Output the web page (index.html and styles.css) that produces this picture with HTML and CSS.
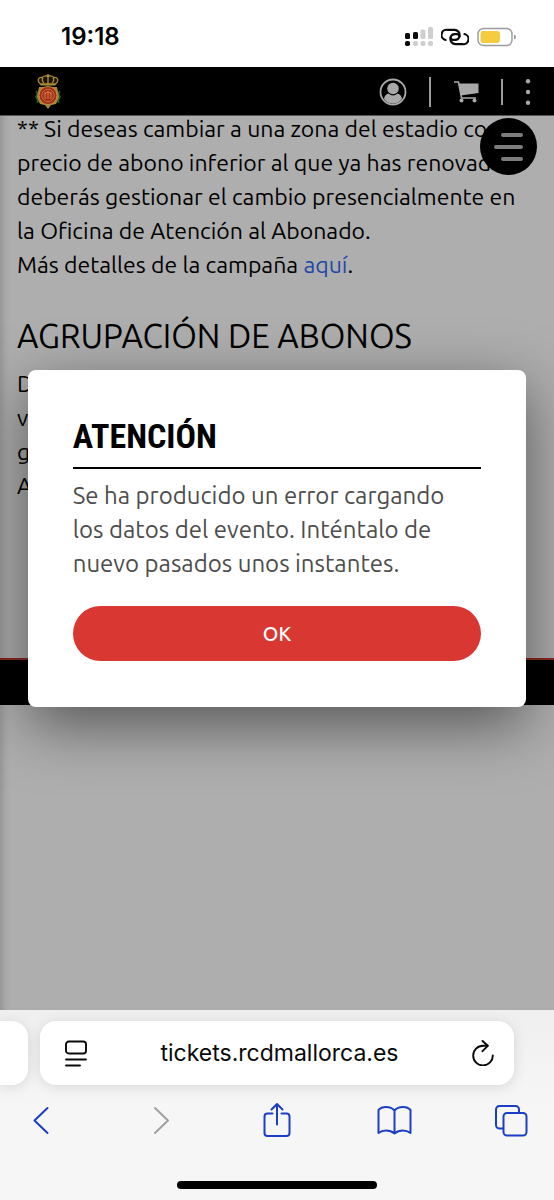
FILE: index.html
```
<!DOCTYPE html>
<html lang="es">
<head>
<meta charset="utf-8">
<meta name="viewport" content="width=device-width, initial-scale=1">
<title>tickets.rcdmallorca.es</title>
<link rel="stylesheet" href="styles.css">
</head>
<body>
<div class="phone">
  <div class="status">
    <time class="clock">19:18</time>
    <div class="indicators">
      <svg width="28" height="20" viewBox="0 0 28 20" aria-label="Cobertura">
        <g fill="#0b0b0b"><rect x="0" y="6" width="5" height="6" rx="1.5"/><rect x="8" y="5" width="5" height="7" rx="1.5"/><rect x="0" y="14" width="5" height="5" rx="1.8"/></g>
        <g fill="#cfcfcf"><rect x="15.500" y="2.500" width="5" height="9.500" rx="1.500"/><rect x="23" y="0" width="5" height="12" rx="1.500"/><rect x="8" y="14" width="5" height="5" rx="2"/><rect x="15.500" y="14" width="5" height="5" rx="2"/><rect x="23" y="14" width="5" height="5" rx="2"/></g>
      </svg>
      <svg width="28" height="18" viewBox="0 0 28 18" fill="none" stroke="#0b0b0b" stroke-width="2.200" stroke-linecap="round" aria-label="Punto de acceso">
        <path d="M4.500 12A5.200 5.200 0 0 1 6.500 1.800H13.500A5.200 5.200 0 0 1 18.500 8A4.500 4.500 0 0 1 14 11.800H11.500A2.800 2.800 0 0 1 9.500 9.500"/>
        <path d="M23.500 6A5.200 5.200 0 0 1 21.500 16.200H14.500A5.200 5.200 0 0 1 9.500 10A4.500 4.500 0 0 1 14 6.200H16.500A2.800 2.800 0 0 1 18.500 8.500"/>
      </svg>
      <svg width="40" height="20" viewBox="0 0 40 20" aria-label="Batería">
        <rect x="1" y="1.500" width="34" height="17" rx="5.500" fill="none" stroke="#9b9b9b" stroke-width="1.400"/>
        <rect x="3.500" y="4" width="19.500" height="12" rx="3" fill="#f5cc3f"/>
        <path d="M37 7.500Q39 8 39 10Q39 12 37 12.500Z" fill="#9b9b9b"/>
      </svg>
    </div>
  </div>

  <main class="view">
    <header class="site-header">
      <a class="logo" href="#" aria-label="RCD Mallorca">
        <svg width="28" height="36" viewBox="0 0 28 36">
          <ellipse cx="14" cy="22.500" rx="12.300" ry="9" fill="#17472d"/>
          <path d="M2 17l2 3-2 3 2 3-1 3M26 17l-2 3 2 3-2 3 1 3" stroke="#2b5c32" fill="none" stroke-width="1.500"/>
          <path d="M5 13h18l2 10-3 7-5 1-3 4-3-4-5-1-3-7Z" fill="#a88738"/>
          <path d="M6.500 10C2 6 5 3 8 3.500Q11 1 14 2.500Q17 1 20 3.500C23 3 26 6 21.500 10Z" fill="#1b1708" stroke="#a98a36" stroke-width="1.300"/>
          <path d="M14 0v10M12.500 1.500h3M9 4q-2 2 1 5M19 4q2 2-1 5M6.500 10.800h15" stroke="#b59741" stroke-width="1.200" fill="none"/>
          <circle cx="14" cy="21.500" r="9" fill="#a3261c" stroke="#c18e36" stroke-width="1"/>
          <circle cx="14" cy="21.500" r="6.300" fill="#ab2b20" stroke="#c68b38" stroke-width=".8"/>
          <path d="M11 25v-7M17 25v-7M14 17v8M11 20q3-4 6 0" stroke="#c99a40" stroke-width=".9" fill="none"/>
        </svg>
      </a>
      <nav class="site-nav">
        <button class="icon-btn" type="button" aria-label="Mi cuenta">
          <svg width="28" height="28" viewBox="0 0 28 28"><circle cx="14" cy="14" r="12.500" fill="none" stroke="#a9a9a9" stroke-width="1.800"/><circle cx="14" cy="10.500" r="5.800" fill="#a9a9a9"/><path d="M5 21Q5.500 16.500 9.500 15.500Q14 19.500 18.500 15.500Q22.500 16.500 23 21Q19.500 25.500 14 25.500Q8.500 25.500 5 21Z" fill="#a9a9a9"/></svg>
        </button>
        <span class="rule"></span>
        <button class="icon-btn" type="button" aria-label="Carrito">
          <svg width="26" height="24" viewBox="0 0 26 24"><path d="M1 2h4.500l3 16H23" fill="none" stroke="#a9a9a9" stroke-width="1.600"/><path d="M6 3.500H25.500V13L7.800 15.500Z" fill="#a9a9a9"/><circle cx="8.500" cy="20.500" r="2" fill="#a9a9a9"/><circle cx="21.500" cy="20.500" r="2" fill="#a9a9a9"/></svg>
        </button>
        <span class="rule rule-short"></span>
        <button class="icon-btn" type="button" aria-label="Más opciones">
          <svg width="6" height="26" viewBox="0 0 6 26" fill="#a9a9a9"><circle cx="3" cy="2.300" r="2.200"/><circle cx="3" cy="13" r="2.200"/><circle cx="3" cy="23.700" r="2.200"/></svg>
        </button>
      </nav>
      <button class="menu" type="button" aria-label="Menú"><span></span><span class="long"></span><span></span></button>
    </header>

    <article class="content">
      <p>** Si deseas cambiar a una zona del estadio con<br>precio de abono inferior al que ya has renovado,<br>deberás gestionar el cambio presencialmente en<br>la Oficina de Atención al Abonado.<br>Más detalles de la campaña <a href="#">aquí</a>.</p>
      <h2>AGRUPACIÓN DE ABONOS</h2>
      <p>D<br>v<br>g<br>A</p>
    </article>
    <footer class="site-footer"></footer>

    <div class="overlay">
      <section class="dialog" role="alertdialog" aria-labelledby="dlg-title" aria-describedby="dlg-text">
        <h1 id="dlg-title">ATENCIÓN</h1>
        <p id="dlg-text">Se ha producido un error cargando<br>los datos del evento. Inténtalo de<br>nuevo pasados unos instantes.</p>
        <button class="ok" type="button">OK</button>
      </section>
    </div>
  </main>

  <div class="browser">
    <div class="tabs">
      <div class="prev-tab"></div>
      <div class="address">
        <button class="icon-btn" type="button" aria-label="Ajustes de página">
          <svg width="22" height="27" viewBox="0 0 22 27" fill="none" stroke="#0a0a0a" stroke-width="1.900" stroke-linecap="round"><rect x="1" y="1.500" width="20" height="12" rx="2.800"/><path d="M1 19.500h20M1 25.500h14"/></svg>
        </button>
        <a class="url" href="#">tickets.rcdmallorca.es</a>
        <button class="icon-btn" type="button" aria-label="Recargar">
          <svg width="22" height="26" viewBox="0 0 22 26" fill="none" stroke="#0a0a0a" stroke-width="1.900" stroke-linecap="round" stroke-linejoin="round"><path d="M15.500 5.800H11A9.800 9.800 0 1 0 20.800 15.400"/><path d="M10.500 1L15.800 5.800L10.500 11.200"/></svg>
        </button>
      </div>
    </div>
    <nav class="toolbar">
      <button class="icon-btn" type="button" aria-label="Atrás"><svg width="36" height="36" viewBox="0 0 36 36"><path d="M24.500 6L11.500 18.500L24.500 31"/></svg></button>
      <button class="icon-btn off" type="button" aria-label="Adelante"><svg width="36" height="36" viewBox="0 0 36 36"><path d="M14 6L27 18.500L14 31"/></svg></button>
      <button class="icon-btn" type="button" aria-label="Compartir"><svg width="36" height="36" viewBox="0 0 36 36"><path d="M14.500 11.500H9.500A3 3 0 0 0 6.500 14.500V31A3 3 0 0 0 9.500 34H28.500A3 3 0 0 0 31.500 31V14.500A3 3 0 0 0 28.500 11.500H23.500M19 22.500V2.500M13.500 7.500L19 2L24.500 7.500"/></svg></button>
      <button class="icon-btn" type="button" aria-label="Marcadores"><svg width="36" height="36" viewBox="0 0 36 36"><path d="M18.500 8.500Q15.500 5 10 5Q5 5 2.500 8V31Q6 28.500 10 28.500Q15 28.500 18.500 31.500Q22 28.500 27 28.500Q31 28.500 34.500 31V8Q32 5 27 5Q21.500 5 18.500 8.500V31.500"/></svg></button>
      <button class="icon-btn" type="button" aria-label="Pestañas"><svg width="36" height="36" viewBox="0 0 36 36"><rect x="10.500" y="11" width="23" height="22.500" rx="3.500"/><path d="M10 26.500H6.500A3.500 3.500 0 0 1 3 23V7.500A3.500 3.500 0 0 1 6.500 4H22.500A3.500 3.500 0 0 1 26 7.500V10.500"/></svg></button>
    </nav>
    <div class="home"></div>
  </div>
</div>
</body>
</html>
```
FILE: styles.css
```
* { box-sizing: border-box; }
body, h1, h2, p { margin: 0; }
body { font-family: Ubuntu, "Noto Sans", sans-serif; background: #fff; color: #000; }
button { font: inherit; border: 0; padding: 0; background: none; cursor: pointer; }
svg { display: block; }

.phone { display: flex; flex-direction: column; min-height: 100vh; }

.status { display: flex; justify-content: space-between; align-items: center; padding: 20px 37px 13px 61px; }
.clock { font: 600 24px/34px Inter, sans-serif; }
.indicators { display: flex; align-items: center; gap: 8px; }

.view { position: relative; flex: 1; display: flex; flex-direction: column; background: #aeaeae; overflow: hidden; }
.site-header { position: relative; z-index: 1; display: flex; justify-content: space-between; align-items: center; height: 49px; padding: 0 23px 0 34px; background: #000; border-bottom: 1px solid #555; }
.logo { padding-top: 2px; }
.icon-btn { display: flex; align-items: center; justify-content: center; flex: none; }
.site-nav { display: flex; align-items: center; padding-top: 2px; }
.rule { width: 2px; height: 30px; margin: 0 22px; background: #9a9a9a; }
.rule-short { height: 26px; }
.menu { position: absolute; top: 51px; right: 17px; width: 57px; height: 57px; border-radius: 50%; background: #000; display: flex; flex-direction: column; align-items: flex-end; justify-content: center; gap: 8px; padding-right: 14px; }
.menu span { width: 22px; height: 4px; border-radius: 2px; background: #7c7c7c; }
.menu .long { width: 29px; }

.content { padding: 0 17px 155px; }
.content p { margin-top: -4px; font-size: 23px; line-height: 34px; white-space: nowrap; }
.content a { color: #1f49a8; text-decoration: none; }
.content h2 { margin: 34px 0 15px; font-size: 33px; font-weight: 400; line-height: 40px; white-space: nowrap; }
.site-footer { height: 47px; background: #000; border-top: 2px solid #8e2622; }

.overlay { position: absolute; inset: 0; display: grid; place-items: center; box-shadow: inset 8px 0 8px -6px rgba(0, 0, 0, .2); }
.dialog { width: 90%; padding: 45px 45px 46px; border-radius: 8px; background: #fff; box-shadow: 0 18px 60px rgba(0, 0, 0, .5); }
.dialog h1 { padding-bottom: 10px; border-bottom: 2px solid #000; font: 700 34px/42px "Roboto Condensed", "Liberation Sans Narrow", Roboto, sans-serif; }
.dialog p { padding: 10px 0 25px; font-size: 24px; line-height: 34px; color: #4d4d4d; white-space: nowrap; }
.ok { display: block; width: 100%; height: 55px; border-radius: 28px; background: #d93732; color: #fff; font-size: 20px; font-weight: 500; }

.browser { padding-bottom: 11px; background: linear-gradient(#efefef, #f6f6f6 50%); overflow: hidden; }
.tabs { display: flex; gap: 12px; padding: 11px 40px 15px 0; }
.prev-tab, .address { height: 64px; background: #fff; box-shadow: 0 2px 14px rgba(0, 0, 0, .12); }
.prev-tab { width: 28px; border-radius: 0 16px 16px 0; }
.address { flex: 1; display: flex; align-items: center; justify-content: space-between; padding: 0 20px 0 25px; border-radius: 16px; }
.url { font: 400 23px/30px Inter, sans-serif; color: #0a0a0a; text-decoration: none; }
.toolbar { display: flex; justify-content: space-between; padding: 2px 25px 43px 23px; fill: none; stroke: #1b3fc4; stroke-width: 2; stroke-linecap: round; stroke-linejoin: round; }
.off { stroke: #a0a0a0; }
.home { width: 36%; height: 8px; margin: 0 auto; border-radius: 4px; background: #000; }
```
